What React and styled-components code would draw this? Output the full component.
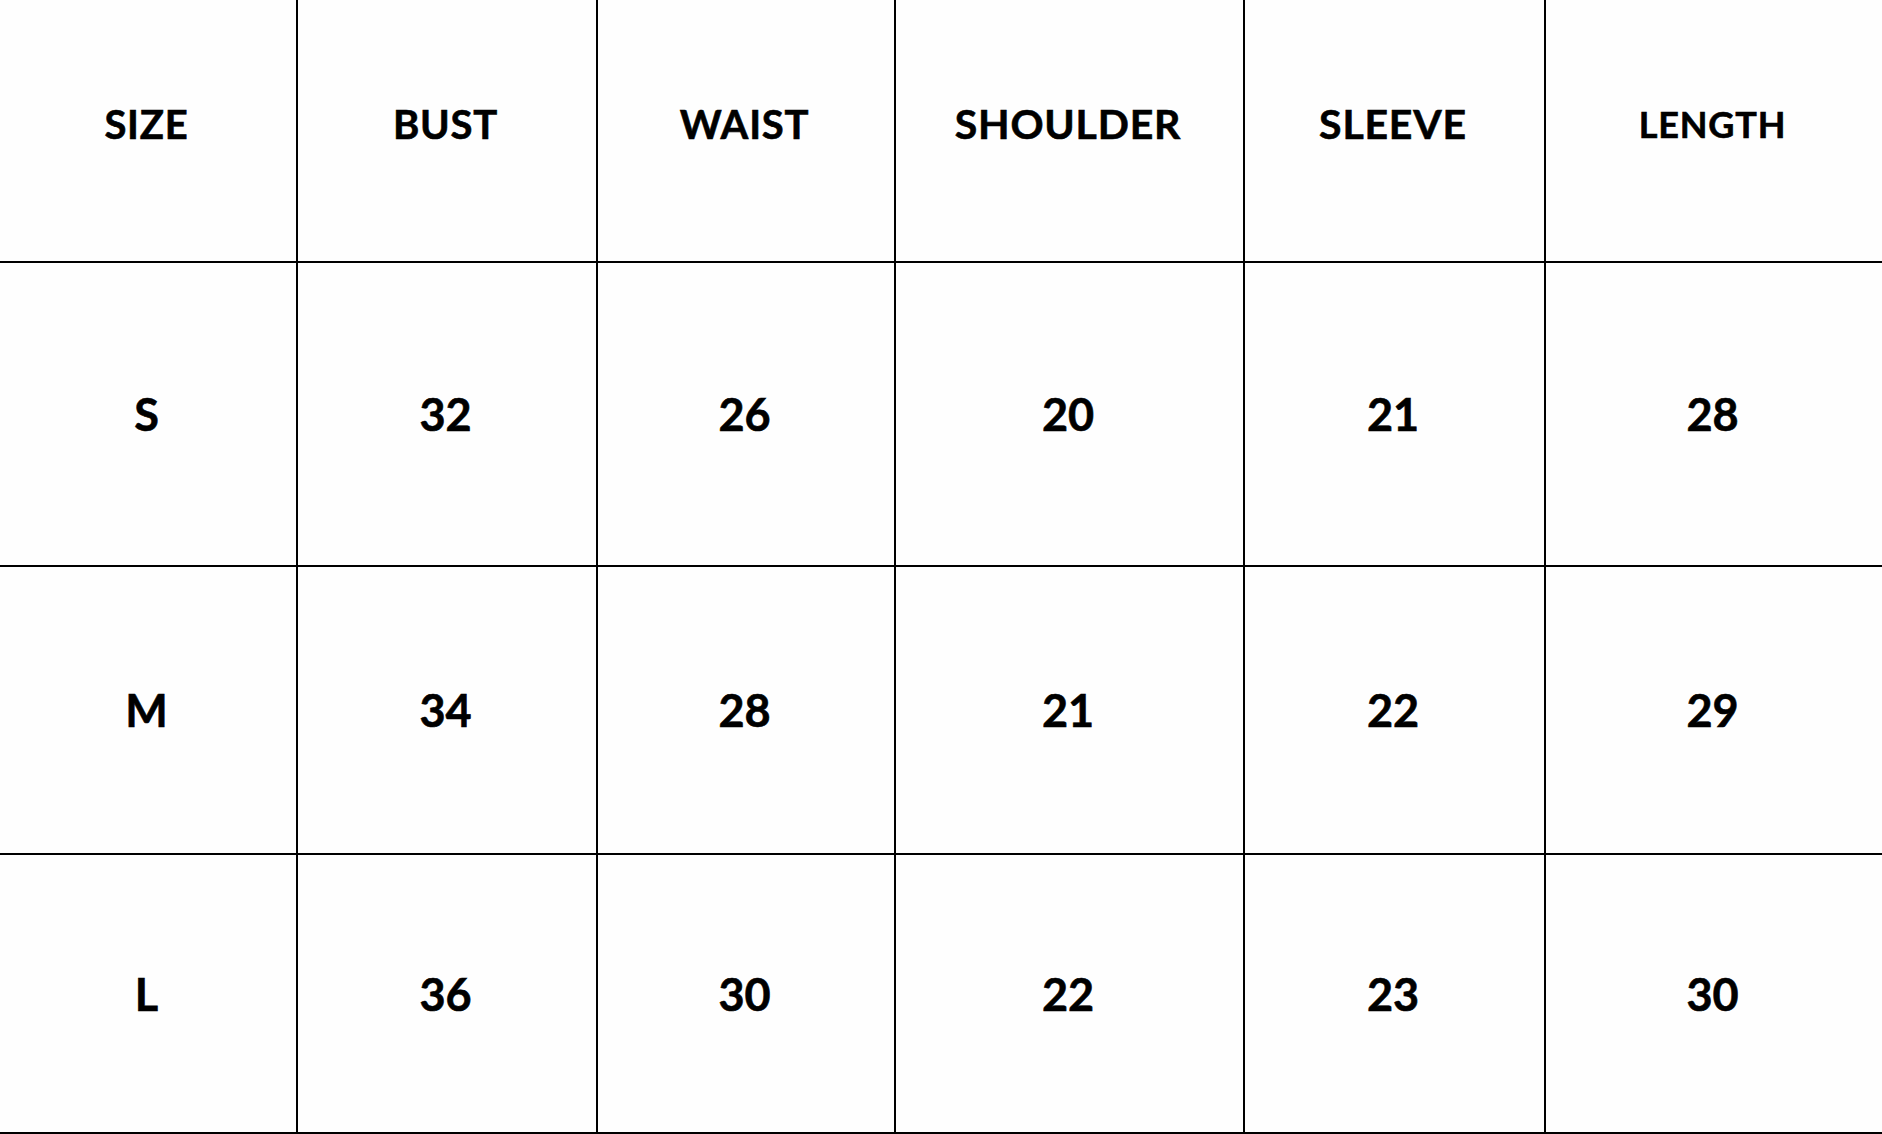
import React from 'react';
import styled, { createGlobalStyle } from 'styled-components';

const GlobalStyle = createGlobalStyle`
  html, body {
    margin: 0;
    padding: 0;
    background: #fefefe;
    overflow: hidden;
  }
  * {
    box-sizing: border-box;
  }
`;

const Grid = styled.div`
  display: grid;
  grid-template-columns: 298px 300px 298px 349px 301px 1fr;
  grid-template-rows: 263px 304px 288px 279px;
  width: 1882px;
  height: 1134px;
  background: #fefefe;
  font-family: Lato, "Noto Sans", sans-serif;
  font-weight: 700;
  color: #000;
`;

const Cell = styled.div`
  display: flex;
  align-items: center;
  justify-content: center;
  border-bottom: 2px solid #000;
  border-right: ${props => (props.$last ? 'none' : '2px solid #000')};
  font-size: ${props => props.$size}px;
  letter-spacing: ${props => (props.$head ? '0.8px' : '0')};
  padding-bottom: ${props => (props.$head ? '14px' : '0')};
  padding-right: 3px;
  -webkit-text-stroke: 0.6px #000;
`;

const headers = [
  { label: 'SIZE', size: 40 },
  { label: 'BUST', size: 40 },
  { label: 'WAIST', size: 40 },
  { label: 'SHOULDER', size: 41 },
  { label: 'SLEEVE', size: 41 },
  { label: 'LENGTH', size: 36 },
];

const rows = [
  ['S', '32', '26', '20', '21', '28'],
  ['M', '34', '28', '21', '22', '29'],
  ['L', '36', '30', '22', '23', '30'],
];

const App = () => {
  return (
    <>
      <GlobalStyle />
      <Grid>
        {headers.map((h, i) => (
          <Cell key={h.label} $head $size={h.size} $last={i === headers.length - 1}>
            {h.label}
          </Cell>
        ))}
        {rows.map(row =>
          row.map((value, i) => (
            <Cell key={row[0] + i} $size={45} $last={i === row.length - 1}>
              {value}
            </Cell>
          ))
        )}
      </Grid>
    </>
  );
};

export default App;
